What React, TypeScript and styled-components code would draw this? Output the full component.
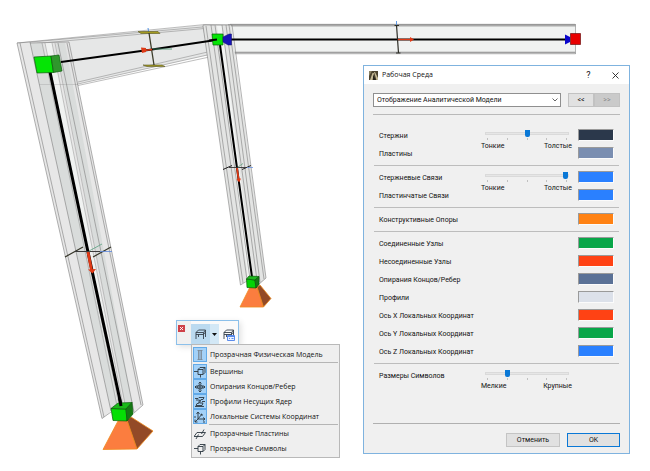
import React, { useState } from "react";
import styled, { createGlobalStyle, css } from "styled-components";

const GlobalStyle = createGlobalStyle`
  *, *::before, *::after { box-sizing: border-box; }
  body { margin: 0; background: #fff; }
  body, button, input, select {
    font-family: Roboto, "Noto Sans", sans-serif;
    font-size: 7px;
    line-height: 10px;
    color: #111;
  }
`;

/* ---------- Workspace ---------- */

const Workspace = styled.main`
  position: relative;
  min-height: 100vh;
  overflow: hidden;
`;

const Viewport = styled.svg`
  display: block;
  width: 100%;
`;

/* ---------- Palette and its menu ---------- */

const PaletteWindow = styled.section`
  position: absolute;
  left: 176px;
  top: 320px;
`;

const PaletteBar = styled.div`
  display: flex;
  align-items: flex-end;
  width: 63px;
  height: 25px;
  border: 1px solid #8cc0ea;
  background: linear-gradient(to right, #f0f0f0 14px, #fafafa 14px);
  box-shadow: 2px 2px 6px rgba(0, 0, 0, 0.12);
`;

const PaletteClose = styled.button`
  display: grid;
  place-items: center;
  align-self: flex-start;
  width: 7px;
  height: 7px;
  margin: 4px 6px 0 1px;
  padding: 0;
  border: 0;
  background: #cf4048;
`;

const ToolButton = styled.button<{ $tone?: "active" | "drop" }>`
  display: grid;
  place-items: center;
  flex: ${(p) => (p.$tone === "drop" ? "0 0 9px" : "1 1 0")};
  height: 20px;
  padding: 0;
  border: 0;
  background: ${(p) =>
    p.$tone === "active" ? "#bbdaf0" : p.$tone === "drop" ? "#d3e8f6" : "transparent"};
`;

const Menu = styled.div`
  display: flex;
  flex-direction: column;
  width: max-content;
  min-width: 149px;
  margin: -1px 0 0 15px;
  padding: 2px 1px 1px;
  border: 1px solid #b9b9b9;
  background: #efefef;
`;

const MenuRow = styled.button`
  display: flex;
  align-items: center;
  gap: 3px;
  height: 15px;
  padding: 0 6px 0 0;
  border: 0;
  background: transparent;
  font-family: "Open Sans", "Noto Sans", sans-serif;
  text-align: left;
  white-space: nowrap;
`;

const MenuIcon = styled.span<{ $on: boolean }>`
  display: grid;
  place-items: center;
  width: 14px;
  height: 15px;
  border: 1px solid transparent;
  ${(p) => p.$on && css`
    background: #a3d1f8;
    border-color: #62aae8;
  `}
`;

const MenuRule = styled.hr`
  width: calc(100% - 16px);
  margin: 0 0 1px 16px;
  border: 0;
  border-top: 1px solid #b5b5b5;
`;

/* ---------- Dialog ---------- */

const Dialog = styled.section`
  position: absolute;
  right: 20px;
  top: 65px;
  width: 267px;
  border: 1px solid #7fb3df;
  background: #f0f0f0;
`;

const TitleBar = styled.header`
  display: flex;
  align-items: center;
  gap: 4px;
  height: 18px;
  padding: 0 9px 0 5px;
  background: #fff;
`;

const Title = styled.h1`
  flex: 1;
  margin: 0;
  font-family: "Open Sans", "Noto Sans", sans-serif;
  font-size: 7px;
  font-weight: 400;
`;

const TitleButton = styled.button`
  display: grid;
  place-items: center;
  width: 9px;
  height: 12px;
  margin-left: 14px;
  padding: 0;
  border: 0;
  background: transparent;
  font-size: 9px;
`;

const DialogBody = styled.div`
  padding: 9px 9px 6px;
`;

const PageBar = styled.div`
  display: flex;
  padding-bottom: 7px;
  border-bottom: 1px solid #b9b9b9;
`;

const SelectBox = styled.div`
  position: relative;
  flex: 1;
  margin-right: 7px;
`;

const PageSelect = styled.select`
  appearance: none;
  display: block;
  width: 100%;
  height: 14px;
  padding: 0 16px 0 3px;
  border: 1px solid #8f8f8f;
  border-radius: 0;
  background: #fff;
`;

const Chevron = styled.svg`
  position: absolute;
  right: 3px;
  top: 5px;
  pointer-events: none;
`;

const StepButton = styled.button`
  display: grid;
  place-items: center;
  width: 26px;
  height: 14px;
  padding: 0;
  border: 1px solid #c2c2c2;
  background: #e1e1e1;
  &:disabled { background: #cacaca; color: #8b8b8b; }
`;

const Groups = styled.div`
  padding: 9px 1px 18px;
`;

const Group = styled.fieldset`
  display: grid;
  grid-template-columns: minmax(0, 1fr) 91px 36px;
  column-gap: 6px;
  grid-auto-rows: 18px;
  align-items: center;
  min-width: 0;
  margin: 0;
  padding: 2px 5px 3px;
  border: 0;
  border-bottom: 1px solid #bdbdbd;
  &:last-child { border-bottom: 0; }
`;

const RowLabel = styled.label`
  grid-column: 1;
  padding-top: 2px;
  white-space: nowrap;
`;

const Swatch = styled.input`
  grid-column: 3;
  width: 36px;
  height: 12px;
  padding: 0;
  border: 1px solid;
  border-color: #9a9a9a #fbfbfb #fbfbfb #9a9a9a;
  border-radius: 0;
  background: none;
  &::-webkit-color-swatch-wrapper { padding: 0; }
  &::-webkit-color-swatch { border: 0; border-radius: 0; }
`;

const SliderCell = styled.div`
  grid-column: 2;
  grid-row: span 2;
  align-self: start;
  padding-top: 3px;
`;

const Range = styled.input`
  appearance: none;
  display: block;
  width: 84px;
  height: 8px;
  margin: 0 0 0 4px;
  background: transparent;
  &::-webkit-slider-runnable-track {
    height: 3px;
    border: 1px solid #dadada;
    background: #e6e6e6;
  }
  &::-webkit-slider-thumb {
    appearance: none;
    width: 5px;
    height: 7px;
    margin-top: -3px;
    border-radius: 0 0 2px 2px;
    background: #0a78d6;
  }
`;

const Ticks = styled.div`
  display: flex;
  justify-content: space-between;
  margin: 1px 5px 1px 6px;
`;

const Tick = styled.i`
  width: 1px;
  height: 2px;
  background: #c0c0c0;
`;

const Ends = styled.div`
  display: flex;
  justify-content: space-between;
`;

const Footer = styled.footer`
  display: flex;
  justify-content: flex-end;
  gap: 7px;
  padding-top: 9px;
  border-top: 1px solid #b0b0b0;
`;

const ActionButton = styled.button<{ $primary?: boolean }>`
  flex: 0 0 ${(p) => (p.$primary ? "53px" : "54px")};
  height: 14px;
  padding: 0;
  border: 1px solid ${(p) => (p.$primary ? "#0a78d6" : "#c4c4c4")};
  background: #e1e1e1;
`;

/* ---------- Model drawing ---------- */

function Model() {
  return (
    <Viewport viewBox="0 0 650 471" role="img" aria-label="Аналитическая модель рамы">
      {/* girder */}
      <g stroke="#8a8a8a" strokeOpacity=".7" strokeWidth=".8" fill="none">
        <path d="M30 42 203 25 218 26 218 53 78 84 40 85z" fill="#e6e7e7" stroke="none" />
        <path d="M17 43 205 24.500 233 25M30 42 214 26M31 44 210 28M78 82 212 51M78 84 214 53.500M78 85.500 214 56M39 84.500H78M40 86 78 84M203 25l6 33" />
      </g>

      {/* left column */}
      <path d="M17 43 69 42 143 405 134 413 111 411 102 418.500z" fill="#e4e4e4" fillOpacity=".88" />
      <path d="M30 43 43 43 119 409 111 411zM56 43 65 43 134 412 125 405z" fill="#d9dcdb" />
      <path d="M45 43 52 43 123 404 118 406z" fill="#f0f2f1" />
      <g stroke="#7d7d7d" strokeOpacity=".75" strokeWidth=".8" fill="none">
        <path d="M17 43 102 418.500 111 412M20 43 104 417M30 42 111 411M58 43 134 412M69 42 143 405 134 413M67 43 141 405M17 43 30 42M30 43 69 42" />
        <path d="M42 43 117 406M45 43 119 406M52 43 123 405M55 43 125 404" strokeOpacity=".5" />
      </g>
      <path d="M39 84.500H78" stroke="#8a8a8a" strokeOpacity=".35" strokeWidth=".8" />

      {/* right beam */}
      <path d="M228 24H575.500V54H232z" fill="#f0f2f1" />
      <path d="M228 25.300H575.500" stroke="#a9a9a9" strokeWidth="2.400" />
      <path d="M232 53H575.500" stroke="#b9b9b9" strokeWidth="2.600" />
      <path d="M230 52.300H575M230 24.300H575M575.500 24V54" stroke="#858585" strokeWidth=".6" />

      {/* right column */}
      <path d="M203 26 231 25 266 278 260 284 246 281 240.500 285z" fill="#e3e4e3" />
      <path d="M217 26 222 26 253 279 248 280z" fill="#f2f4f3" />
      <g stroke="#808080" strokeOpacity=".75" strokeWidth=".8" fill="none">
        <path d="M203 26 240.500 285 247 281M206 26 243 283M211 25 247 280M215 25 250 279M222 25 257 280M226 25 260 282M229 25 264 279M232 25 266 278 259 284M203 25 232 25" />
      </g>

      {/* member axes */}
      <path d="M50 72 88 252 121 405" stroke="#000" strokeWidth="3" fill="none" />
      <path d="M61 62 152 49.500 216 40" stroke="#000" strokeWidth="2" fill="none" />
      <path d="M220 45 237 168 252 277" stroke="#000" strokeWidth="2" fill="none" />
      <path d="M230 39.500H566" stroke="#000" strokeWidth="2" />

      {/* girder section */}
      <path d="M148 28 149 34" stroke="#4f8fe0" />
      <path d="M138 31.500 158 31.500 160 33.500 141 33.500zM143 65 162 65 165 66.500 147 66.500z" fill="#a39b20" stroke="#5e5b22" strokeWidth=".6" />
      <path d="M149 33 154 65" stroke="#3c3c2a" strokeWidth="1.300" />
      <path d="M153 49H172" stroke="#3f8f68" strokeWidth=".8" />
      <path d="M144 50.500 152 49.500" stroke="#dd3a16" strokeWidth="1.600" />
      <path d="M141 47.500 146 48 146 52 142 53z" fill="#dd3a16" />

      {/* left column section */}
      <path d="M65 257 83 247M93 257 111 247" stroke="#37372a" strokeWidth="1.200" />
      <path d="M75 251.500H100" stroke="#3a3a3a" />
      <path d="M100 251.500H112" stroke="#5b86dd" strokeWidth=".8" />
      <path d="M89 251 102 244" stroke="#68a68a" strokeWidth=".9" />
      <path d="M88 252 91.500 270" stroke="#e03a16" strokeWidth="2.800" />
      <path d="M88 269.500 96 269 92.500 273.500z" fill="#e03a16" />

      {/* right column section */}
      <path d="M223 169.500 232 165.500M242 169.500 251 165.500" stroke="#222" />
      <path d="M229 167.500H247" stroke="#333" strokeWidth=".9" />
      <path d="M247 167.500H253" stroke="#6b92e0" strokeWidth=".8" />
      <path d="M238 167 243 163.500" stroke="#62a683" strokeWidth=".8" />
      <path d="M237 168 238.800 181" stroke="#e03a16" strokeWidth="1.800" />
      <path d="M236.500 179 241 178.500 239.200 182.500z" fill="#e03a16" />

      {/* right beam section */}
      <path d="M396.500 21V26" stroke="#4f8fe0" strokeWidth=".9" />
      <path d="M396.500 25 398.500 53M394.500 25.500H399M396 53H400.500" stroke="#2f2f28" strokeWidth="1.200" />
      <path d="M398 39.500H412" stroke="#e03a16" strokeWidth="1.300" />
      <path d="M410 37 414 39.500 410 42z" fill="#e03a16" />

      {/* supports */}
      <g stroke="#ef8a1c" strokeWidth=".8" strokeLinejoin="round">
        <path d="M118 421 127 420 137 449 103 449.500z" fill="#fb7d3f" />
        <path d="M127 420 131 417 153 431 137 449z" fill="#934a27" />
        <path d="M250 287 257 287 263.500 307 240 307z" fill="#fb7d3f" />
        <path d="M257 287 260 285 271 298.500 263.500 307z" fill="#934a27" />
      </g>

      {/* nodes */}
      <g stroke="#0a5c0a" strokeWidth=".7" strokeLinejoin="round">
        <path d="M34 57 51 56 53.500 72.500 37 73z" fill="#05e405" />
        <path d="M51 56 59 55 62 71 53.500 72.500z" fill="#2f972c" />
        <path d="M111 408.500 126 409 127 421 113 420.500z" fill="#05df05" />
        <path d="M111 408.500 118 403 132 402.500 126 409z" fill="#19b919" />
        <path d="M126 409 132 402.500 133 414 127 421z" fill="#157a14" />
        <path d="M246.500 279 255 280 256 288 247 287.500z" fill="#05d305" />
        <path d="M246.500 279 249 276 259 276.500 255 280z" fill="#1eb81e" />
        <path d="M255 280 259 276.500 259 284.500 256 288z" fill="#157a14" />
        <path d="M212 34H223V45H213z" fill="#05e405" />
      </g>
      <path d="M209 40.500 217 39.500" stroke="#000" strokeWidth="2" />
      <path d="M119.500 398 121 406" stroke="#000" strokeWidth="3" />
      <path d="M223 37 229 34 231.500 34V45L228 45 223 42z" fill="#1714b8" stroke="#15156b" strokeWidth=".5" />
      <path d="M565 34.500 570 37V42L565 44.500z" fill="#0905cb" />
      <path d="M570.500 33.500H580.500V44.500H570.500z" fill="#e80000" stroke="#6d1010" strokeWidth=".7" />
    </Viewport>
  );
}

/* ---------- Icons ---------- */

const iconPaths: Record<string, React.ReactNode> = {
  column: (
    <path
      d="M3.500 1.500H8.500M3.500 10.500H8.500M4.500 1.500V10.500M7.500 1.500V10.500M6 2V10"
      stroke="#77818b"
      strokeWidth=".8"
    />
  ),
  vertex: (
    <path d="M0 5.500H4M4 3.500H9V8.500H4zM4 3.500 6 1.500H11V6.500L9 8.500M9 3.500 11 1.500M6.500 8.500V11.500" />
  ),
  release: (
    <g>
      <path d="M6 1V11M1 6H11M4.500 2.500 6 1 7.500 2.500M4.500 9.500 6 11 7.500 9.500M2.500 4.500 1 6 2.500 7.500M9.500 4.500 11 6 9.500 7.500" />
      <ellipse cx="6" cy="6" rx="3" ry="2" />
    </g>
  ),
  profile: <path d="M1 2.500H4L5 1.500H10L9 3.500H7L5.500 7H9L8 9.500H2L3 7.500H4.500L5.500 4H2M8 5.500H11M1 10.500H10" />,
  axes: (
    <g>
      <path d="M4 1V8H11M4 8 1 11M2.500 3 4 1 5.500 3M9 6.500 11 8 9 9.500M1 8.500V11H3.500M4 8 8 3M6.500 3.500 8 3V5" />
      <path d="M0 6H2M9 11H11" />
    </g>
  ),
  plate: <path d="M0 8.500H8.500L11.500 4.500H3zM2 11 4.500 6.500M7.500 6 10 1.500" />,
};

function Icon({ name }: { name: string }) {
  return (
    <svg width="12" height="12" viewBox="0 0 12 12" fill="none" stroke="#2d3942" strokeWidth=".9" aria-hidden="true">
      {iconPaths[name]}
    </svg>
  );
}

function FrameIcon({ settings }: { settings?: boolean }) {
  return (
    <svg width="13" height="13" viewBox="0 0 13 13" fill="none" stroke="#354049" strokeWidth=".9" aria-hidden="true">
      <path d="M2 4.500 4.500 2H11.500L9.500 4.500zM2 6.500H9.500L11.500 4M2 4.500V11M9.500 4.500V11M11.500 2V9M4.500 6.500V9" />
      {settings && (
        <g stroke="#4a80ea">
          <path d="M5.500 7.500H12.500V12.500H5.500z" fill="#edf3ff" />
          <path d="M5.500 8.500H12.500M7 10.500H8M9.500 10.500H11.500" />
        </g>
      )}
    </svg>
  );
}

/* ---------- Data ---------- */

type MenuEntry = { label: string; icon: string; on: boolean } | null;

const menuEntries: MenuEntry[] = [
  { label: "Прозрачная Физическая Модель", icon: "column", on: true },
  null,
  { label: "Вершины", icon: "vertex", on: true },
  { label: "Опирания Концов/Ребер", icon: "release", on: true },
  { label: "Профили Несущих Ядер", icon: "profile", on: true },
  { label: "Локальные Системы Координат", icon: "axes", on: true },
  null,
  { label: "Прозрачные Пластины", icon: "plate", on: false },
  { label: "Прозрачные Символы", icon: "vertex", on: false },
];

type Slider = { from: string; to: string; value: number };
type Setting = { label: string; color?: string; slider?: Slider };

const groups: Setting[][] = [
  [
    { label: "Стержни", color: "#2b384b", slider: { from: "Тонкие", to: "Толстые", value: 2 } },
    { label: "Пластины", color: "#7a8eb1" },
  ],
  [
    { label: "Стержневые Связи", color: "#2a80ff", slider: { from: "Тонкие", to: "Толстые", value: 4 } },
    { label: "Пластинчатые Связи", color: "#2a80ff" },
  ],
  [{ label: "Конструктивные Опоры", color: "#ff8214" }],
  [
    { label: "Соединенные Узлы", color: "#08a648" },
    { label: "Несоединенные Узлы", color: "#ff4214" },
    { label: "Опирания Концов/Ребер", color: "#5a7196" },
    { label: "Профили", color: "#dce1ea" },
    { label: "Ось X Локальных Координат", color: "#ff4214" },
    { label: "Ось Y Локальных Координат", color: "#08a648" },
    { label: "Ось Z Локальных Координат", color: "#2a80ff" },
  ],
  [{ label: "Размеры Символов", slider: { from: "Мелкие", to: "Крупные", value: 1 } }],
];

function SettingRow({ setting, id }: { setting: Setting; id: string }) {
  const { label, color, slider } = setting;
  return (
    <>
      <RowLabel htmlFor={id}>{label}</RowLabel>
      {slider && (
        <SliderCell>
          <Range
            id={color ? undefined : id}
            aria-label={color ? `${label}: ${slider.from} – ${slider.to}` : undefined}
            type="range"
            min={0}
            max={4}
            defaultValue={slider.value}
          />
          <Ticks>
            {[0, 1, 2, 3, 4].map((n) => <Tick key={n} />)}
          </Ticks>
          <Ends>
            <span>{slider.from}</span>
            <span>{slider.to}</span>
          </Ends>
        </SliderCell>
      )}
      {color && <Swatch id={id} type="color" defaultValue={color} />}
    </>
  );
}

function Palette() {
  const [entries, setEntries] = useState(menuEntries);
  const toggle = (index: number) =>
    setEntries(entries.map((e, i) => (e && i === index ? { ...e, on: !e.on } : e)));
  return (
    <PaletteWindow aria-label="Аналитическая модель">
      <PaletteBar>
        <PaletteClose aria-label="Закрыть панель">
          <svg width="5" height="5" viewBox="0 0 5 5" stroke="#fff" strokeWidth=".9" aria-hidden="true">
            <path d="M1 1 4 4M4 1 1 4" />
          </svg>
        </PaletteClose>
        <ToolButton $tone="active" aria-label="Отображение модели"><FrameIcon /></ToolButton>
        <ToolButton $tone="drop" aria-label="Открыть меню" aria-expanded="true">
          <svg width="5" height="3" viewBox="0 0 5 3" aria-hidden="true"><path d="M0 0H5L2.500 3z" fill="#111" /></svg>
        </ToolButton>
        <ToolButton aria-label="Настройки отображения"><FrameIcon settings /></ToolButton>
      </PaletteBar>
      <Menu role="menu">
        {entries.map((entry, i) =>
          entry ? (
            <MenuRow key={i} role="menuitemcheckbox" aria-checked={entry.on} onClick={() => toggle(i)}>
              <MenuIcon $on={entry.on}><Icon name={entry.icon} /></MenuIcon>
              {entry.label}
            </MenuRow>
          ) : (
            <MenuRule key={i} />
          )
        )}
      </Menu>
    </PaletteWindow>
  );
}

function SettingsDialog() {
  return (
    <Dialog role="dialog" aria-labelledby="dialog-title">
      <TitleBar>
        <svg width="9" height="9" viewBox="0 0 9 9" aria-hidden="true">
          <path d="M0 0H9V9H0z" fill="#4c432f" />
          <path d="M0 0H3L0 5z" fill="#8b8264" />
          <path d="M1 9 3.500 2 5 2 3.500 9zM5 1 6 1 9 7V9H7.500z" fill="#c5b995" />
          <path d="M4 4 7 9H4z" fill="#27231a" />
        </svg>
        <Title id="dialog-title">Рабочая Среда</Title>
        <TitleButton aria-label="Справка">?</TitleButton>
        <TitleButton aria-label="Закрыть">
          <svg width="7" height="7" viewBox="0 0 7 7" stroke="#222" strokeWidth=".9" aria-hidden="true">
            <path d="M.5 .5 6.500 6.500M6.500 .5 .5 6.500" />
          </svg>
        </TitleButton>
      </TitleBar>
      <DialogBody>
        <PageBar>
          <SelectBox>
            <PageSelect aria-label="Раздел настроек">
              <option>Отображение Аналитической Модели</option>
            </PageSelect>
            <Chevron width="6" height="4" viewBox="0 0 6 4" fill="none" stroke="#555" strokeWidth=".9" aria-hidden="true">
              <path d="M.5 .5 3 3 5.500 .5" />
            </Chevron>
          </SelectBox>
          <StepButton aria-label="Предыдущий раздел">&lt;&lt;</StepButton>
          <StepButton aria-label="Следующий раздел" disabled>&gt;&gt;</StepButton>
        </PageBar>
        <Groups>
          {groups.map((rows, g) => (
            <Group key={g}>
              {rows.map((setting, r) => (
                <SettingRow key={r} setting={setting} id={`setting-${g}-${r}`} />
              ))}
            </Group>
          ))}
        </Groups>
        <Footer>
          <ActionButton>Отменить</ActionButton>
          <ActionButton $primary>OK</ActionButton>
        </Footer>
      </DialogBody>
    </Dialog>
  );
}

export default function App() {
  return (
    <>
      <GlobalStyle />
      <Workspace>
        <Model />
        <Palette />
        <SettingsDialog />
      </Workspace>
    </>
  );
}
